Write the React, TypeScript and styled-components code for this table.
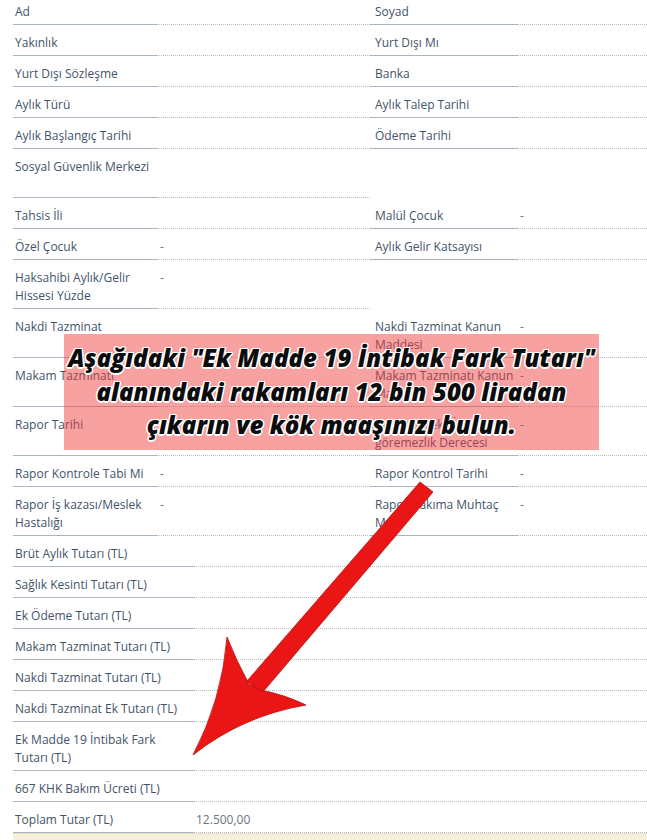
import React from "react";
import styled, { createGlobalStyle } from "styled-components";

const Global = createGlobalStyle`
  html, body { margin: 0; padding: 0; background: #ffffff; }
  body { font-family: "Open Sans", "Liberation Sans", sans-serif; }
`;

const Screen = styled.div`
  position: relative;
  width: 647px;
  height: 840px;
  overflow: hidden;
  background: #ffffff;
`;

const Page = styled.div`
  margin-top: -6px;
  padding-left: 13px;
`;

const TopTable = styled.div`
  display: grid;
  grid-template-columns: 144px 213px 148px 1fr;
`;

const BottomTable = styled.div`
  display: grid;
  grid-template-columns: 180px 1fr;
`;

const Cell = styled.div<{ $kind: "label" | "value" | "blank"; $pad?: number; $tall?: boolean }>`
  font-size: 12px;
  line-height: 18px;
  padding: 9px 4px 3px ${(p) => p.$pad ?? 2}px;
  min-height: ${(p) => (p.$tall ? "36px" : "18px")};
  color: ${(p) => (p.$kind === "label" ? "#3f5469" : "#6b7580")};
  border-bottom: ${(p) =>
    p.$kind === "label"
      ? "1px solid #a9b6c2"
      : p.$kind === "value"
      ? "1px dotted #b4bec7"
      : "1px solid transparent"};
`;

const Beige = styled.div`
  grid-column: 1 / -1;
  height: 12px;
  background: #f6efd9;
  border-top: 1px solid #e9dfc0;
`;

const Notice = styled.div`
  position: absolute;
  left: 64px;
  top: 334px;
  width: 535px;
  height: 116px;
  box-sizing: border-box;
  padding-top: 7px;
  background: rgba(238, 58, 58, 0.48);
  text-align: center;
`;

const NoticeText = styled.p`
  margin: 0;
  font-family: "Open Sans", "Liberation Sans", sans-serif;
  font-weight: 800;
  font-style: italic;
  font-size: 24px;
  line-height: 33.5px;
  letter-spacing: 0.1px;
  white-space: nowrap;
  color: #0c0c0c;
  text-shadow:
    1.5px 0 0 #fff, -1.5px 0 0 #fff, 0 1.5px 0 #fff, 0 -1.5px 0 #fff,
    1px 1px 0 #fff, -1px -1px 0 #fff, 1px -1px 0 #fff, -1px 1px 0 #fff;
`;

const ArrowLayer = styled.svg`
  position: absolute;
  left: 0;
  top: 0;
  width: 647px;
  height: 840px;
  pointer-events: none;
`;

type Row4 = { l1: string; v1?: string; l2?: string; v2?: string; blank2?: boolean; tall?: boolean };

const top: Row4[] = [
  { l1: "Ad", l2: "Soyad" },
  { l1: "Yakınlık", l2: "Yurt Dışı Mı" },
  { l1: "Yurt Dışı Sözleşme", l2: "Banka" },
  { l1: "Aylık Türü", l2: "Aylık Talep Tarihi" },
  { l1: "Aylık Başlangıç Tarihi", l2: "Ödeme Tarihi" },
  { l1: "Sosyal Güvenlik Merkezi", blank2: true, tall: true },
  { l1: "Tahsis İli", l2: "Malül Çocuk", v2: "-" },
  { l1: "Özel Çocuk", v1: "-", l2: "Aylık Gelir Katsayısı" },
  { l1: "Haksahibi Aylık/Gelir Hissesi Yüzde", v1: "-", blank2: true },
  { l1: "Nakdi Tazminat", l2: "Nakdi Tazminat Kanun Maddesi", v2: "-" },
  { l1: "Makam Tazminatı", l2: "Makam Tazminatı Kanun Maddesi", v2: "-" },
  { l1: "Rapor Tarihi", l2: "Rapor Sürekli İş göremezlik Derecesi", v2: "-" },
  { l1: "Rapor Kontrole Tabi Mi", v1: "-", l2: "Rapor Kontrol Tarihi", v2: "-" },
  { l1: "Rapor İş kazası/Meslek Hastalığı", v1: "-", l2: "Rapor Bakıma Muhtaç Mı", v2: "-" },
];

const bottom: [string, string][] = [
  ["Brüt Aylık Tutarı (TL)", ""],
  ["Sağlık Kesinti Tutarı (TL)", ""],
  ["Ek Ödeme Tutarı (TL)", ""],
  ["Makam Tazminat Tutarı (TL)", ""],
  ["Nakdi Tazminat Tutarı (TL)", ""],
  ["Nakdi Tazminat Ek Tutarı (TL)", ""],
  ["Ek Madde 19 İntibak Fark Tutarı (TL)", ""],
  ["667 KHK Bakım Ücreti (TL)", ""],
  ["Toplam Tutar (TL)", "12.500,00"],
];

export default function App() {
  return (
    <>
      <Global />
      <Screen>
        <Page>
          <TopTable>
            {top.map((r, i) => (
              <React.Fragment key={i}>
                <Cell $kind="label" $tall={r.tall}>{r.l1}</Cell>
                <Cell $kind="value" $pad={3}>{r.v1 ?? ""}</Cell>
                {r.blank2 ? (
                  <>
                    <Cell $kind="blank" $pad={5} />
                    <Cell $kind="blank" />
                  </>
                ) : (
                  <>
                    <Cell $kind="label" $pad={5}>{r.l2}</Cell>
                    <Cell $kind="value">{r.v2 ?? ""}</Cell>
                  </>
                )}
              </React.Fragment>
            ))}
          </TopTable>
          <BottomTable>
            {bottom.map(([l, v], i) => (
              <React.Fragment key={i}>
                <Cell $kind="label">{l}</Cell>
                <Cell $kind="value" $pad={3}>{v}</Cell>
              </React.Fragment>
            ))}
            <Beige />
          </BottomTable>
        </Page>

        <Notice>
          <NoticeText>
            Aşağıdaki "Ek Madde 19 İntibak Fark Tutarı"
            <br />
            alanındaki rakamları 12 bin 500 liradan
            <br />
            çıkarın ve kök maaşınızı bulun.
          </NoticeText>
        </Notice>

        <ArrowLayer viewBox="0 0 647 840">
          <g fill="#ea1515" stroke="#b80c0c" strokeWidth="0.8" strokeLinejoin="round">
            <polygon points="420,482 433,492 262,693 247,681" />
            <path d="M 249 684 Q 236 660 227 637 Q 222 700 193 755 Q 242 716 306 705 Q 283 694 260 690 Z" />
          </g>
        </ArrowLayer>
      </Screen>
    </>
  );
}
